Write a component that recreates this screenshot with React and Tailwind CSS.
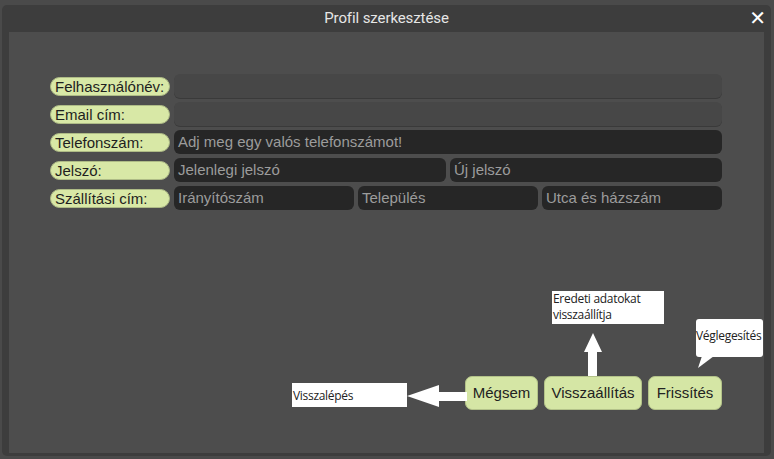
export default function App() {
  return (
    <div className="w-[774px] h-[459px] bg-[#4a4a4a] pt-[5px] pl-[2px] pr-[3px] pb-[3px] overflow-hidden" style={{ fontFamily: '"Liberation Sans", Arial, sans-serif' }}>
      <div className="h-full rounded-[5px] bg-[#3d3d3d] flex flex-col">
        {/* Title bar */}
        <div className="h-[27px] shrink-0 relative flex items-center justify-center">
          <span className="text-[15px] text-[#e6e6e6] tracking-[-0.1px]" style={{ fontFamily: 'Roboto, sans-serif' }}>Profil szerkesztése</span>
          <span className="absolute right-[5px] top-[3px] text-white text-[20px] font-bold leading-none" style={{ fontFamily: '"DejaVu Sans", sans-serif' }}>✕</span>
        </div>

        {/* Body */}
        <div className="flex-1 mx-[7px] mb-[3px] bg-[#4d4d4d] relative pt-[42px] pl-[41px] pr-[42px]">
          <div className="flex flex-col gap-[4px]">
            <Row label="Felhasználónév:">
              <Field muted />
            </Row>
            <Row label="Email cím:">
              <Field muted />
            </Row>
            <Row label="Telefonszám:">
              <Field placeholder="Adj meg egy valós telefonszámot!" />
            </Row>
            <Row label="Jelszó:">
              <Field placeholder="Jelenlegi jelszó" />
              <Field placeholder="Új jelszó" />
            </Row>
            <Row label="Szállítási cím:">
              <Field placeholder="Irányítószám" />
              <Field placeholder="Település" />
              <Field placeholder="Utca és házszám" />
            </Row>
          </div>

          {/* Buttons */}
          <div className="absolute right-[42px] top-[344px] flex gap-[6px]">
            <Button className="w-[73px]">Mégsem</Button>
            <Button className="w-[98px]">Visszaállítás</Button>
            <Button className="w-[74px]">Frissítés</Button>
          </div>

          {/* Annotations */}
          <Note className="left-[283px] top-[351px] w-[115px] h-[24px] pt-[4px]">Visszalépés</Note>
          <svg className="absolute left-[398px] top-[352px]" width="60" height="24" viewBox="0 0 60 24">
            <polygon points="0,12 32,1 32,8 60,8 60,17 32,17 32,23" fill="#fff" />
          </svg>

          <Note className="left-[543px] top-[259px] w-[112px] h-[33px] leading-[16px]">
            Eredeti adatokat
            <br />
            visszaállítja
          </Note>
          <svg className="absolute left-[574px] top-[301px]" width="20" height="43" viewBox="0 0 20 43">
            <polygon points="10,0 19,19 14,19 14,43 5,43 5,19 1,19" fill="#fff" />
          </svg>

          <div className="absolute left-[687px] top-[287px] w-[67px] h-[38px] bg-white rounded-[3px] pt-[10px] text-[12px] text-[#222] leading-[14px] tracking-[-0.3px] whitespace-nowrap" style={{ fontFamily: '"Open Sans", sans-serif' }}>
            Véglegesítés
          </div>
          <svg className="absolute left-[688px] top-[324px]" width="18" height="13" viewBox="0 0 18 13">
            <polygon points="5,0 17,0 1,12" fill="#fff" />
          </svg>
        </div>
      </div>
    </div>
  )
}

function Row({ label, children }) {
  return (
    <div className="flex items-center h-[24px] gap-[4px]">
      <div className="w-[120px] h-[19px] shrink-0 rounded-full bg-[#d8e8a6] border border-[#aebb86] px-[4px] flex items-center text-[15px] text-[#1e1e1e] leading-none">
        {label}
      </div>
      <div className="flex-1 flex gap-[4px] h-full">{children}</div>
    </div>
  )
}

function Field({ placeholder, muted }) {
  return (
    <div
      className={`flex-1 h-full rounded-[6px] flex items-center px-[4px] text-[15px] text-[#9c9c9c] ${
        muted ? 'bg-[#474747] shadow-[0_1px_0_#3a3a3a]' : 'bg-[#262626]'
      }`}
    >
      {placeholder}
    </div>
  )
}

function Button({ children, className }) {
  return (
    <div className={`h-[34px] rounded-[7px] bg-[#d5e6a5] border border-[#b3c289] flex items-center justify-center text-[15px] text-[#222] ${className}`}>
      {children}
    </div>
  )
}

function Note({ children, className }) {
  return (
    <div className={`absolute bg-white text-[12px] text-[#222] pl-[1px] tracking-[-0.3px] ${className}`} style={{ fontFamily: '"Open Sans", sans-serif' }}>
      {children}
    </div>
  )
}
